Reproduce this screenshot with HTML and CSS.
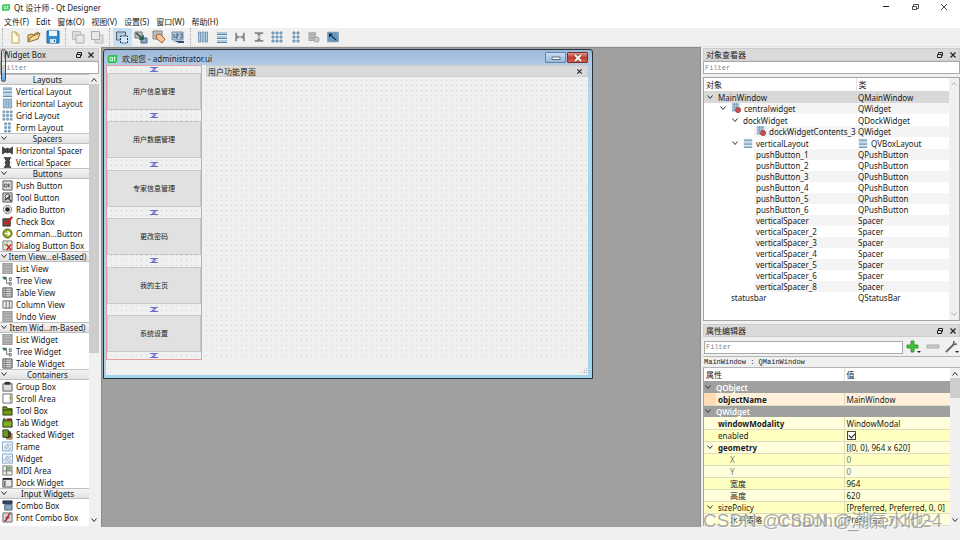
FILE: index.html
```html
<!DOCTYPE html>
<html lang="zh-CN">
<head>
<meta charset="utf-8">
<title>Qt 设计师 - Qt Designer</title>
<link rel="stylesheet" href="styles.css">
</head>
<body>
<svg class="defs" aria-hidden="true">
  <symbol id="qt" viewBox="0 0 12 10"><path d="M2 0h10v8l-2 2H0V2z" fill="#2fc552"/><path d="M3 3h3v4H3zM5 6l2 2M8.500 2v5h1.500M7.500 3.500h2.500" fill="none" stroke="#fff"/></symbol>
  <symbol id="chev" viewBox="0 0 8 8"><path d="M1.500 2.500L4 5.500l2.500-3" fill="none" stroke="currentColor" stroke-width=".9"/></symbol>
  <symbol id="float" viewBox="0 0 8 8"><path d="M2.500 3V1.500h4v3H5M1.500 3.500h4v3h-4z" fill="none" stroke="#222"/></symbol>
  <symbol id="close" viewBox="0 0 8 8"><path d="M1.500 1.500l5 5m0-5l-5 5" fill="none" stroke="#222" stroke-width="1.200"/></symbol>
  <symbol id="vlay" viewBox="0 0 12 12"><path d="M1 1h10v2.500H1zM1 5h10v2.500H1zM1 9h10v2.500H1z" fill="#a9cbe2"/><path d="M1 3.500h10M1 7.500h10M1 11.500h10" stroke="#5f84a3"/></symbol>
  <symbol id="hlay" viewBox="0 0 12 12"><path d="M1.500 1h2v10h-2zM5 1h2v10H5zM8.500 1h2v10h-2z" fill="#b4d4ea" stroke="#6288a8" stroke-width=".8"/></symbol>
  <symbol id="grid" viewBox="0 0 12 12"><path d="M1 1h2v2H1zM5 1h2v2H5zM9 1h2v2H9zM1 5h2v2H1zM5 5h2v2H5zM9 5h2v2H9zM1 9h2v2H1zM5 9h2v2H5zM9 9h2v2H9z" fill="#a9cbe2" stroke="#6288a8" stroke-width=".9"/></symbol>
  <symbol id="form" viewBox="0 0 12 12"><path d="M3 1h2v2H3zM7 1h2v2H7zM3 5h2v2H3zM7 5h2v2H7zM3 9h2v2H3zM7 9h2v2H7z" fill="#a9cbe2" stroke="#6288a8" stroke-width=".9"/></symbol>
  <symbol id="hsp" viewBox="0 0 12 12"><path d="M1 2v8M11 2v8" stroke="#222" stroke-width="1.500"/><path d="M2 3.500l2 1 2-1 2 1 2-1v5l-2-1-2 1-2-1-2 1z" fill="#666" stroke="#222"/><path d="M4 5v3M6 4v4M8 5v3" stroke="#222" stroke-width=".8"/></symbol>
  <symbol id="vsp" viewBox="0 0 12 12"><path d="M2 1h8M2 11h8" stroke="#222" stroke-width="1.500"/><path d="M3.500 2l1 2-1 2 1 2-1 2h5l-1-2 1-2-1-2 1-2z" fill="#666" stroke="#222"/><path d="M5 4h3M4 6h4M5 8h3" stroke="#222" stroke-width=".8"/></symbol>
  <symbol id="push" viewBox="0 0 12 12"><path d="M1 1h10v10H1z" fill="#ddd" stroke="#555"/><path d="M2.500 4.500h3v3h-3zM7 4v4M9.500 4L7.500 6l2 2" fill="none" stroke="#333" stroke-width=".8"/></symbol>
  <symbol id="tool" viewBox="0 0 12 12"><path d="M1 1h10v10H1z" fill="#ccc" stroke="#555"/><circle cx="6" cy="5" r="2.500" fill="#fff" stroke="#333"/><path d="M3 9l6-5M7 7l3 3" stroke="#333" stroke-width="1.300"/></symbol>
  <symbol id="radio" viewBox="0 0 12 12"><circle cx="6" cy="6" r="4.500" fill="#e8e8e8" stroke="#777"/><circle cx="6" cy="6" r="2.500" fill="#222"/></symbol>
  <symbol id="check" viewBox="0 0 12 12"><path d="M1 3h8v8H1z" fill="#555" stroke="#333"/><path d="M2 6l3 3 6-8" fill="none" stroke="#c22" stroke-width="2.500"/></symbol>
  <symbol id="cmd" viewBox="0 0 12 12"><circle cx="6" cy="6" r="5" fill="#8fa91c" stroke="#4f6410"/><path d="M3 6h5M6 3.500L8.500 6 6 8.500" fill="none" stroke="#fff" stroke-width="1.500"/></symbol>
  <symbol id="dbb" viewBox="0 0 12 12"><path d="M1 1h10v10H1z" fill="#e8e8e0" stroke="#777"/><path d="M2 4l1.500 2L6 2" fill="none" stroke="#5a5"/><path d="M5 5l5 6m0-6l-5 6" stroke="#c22" stroke-width="1.600"/></symbol>
  <symbol id="list" viewBox="0 0 12 12"><path d="M1 0h10v12H1z" fill="#b5b5b5" stroke="#858585"/><path d="M2 3h8M2 6h8M2 9h8" stroke="#999" stroke-width=".8"/></symbol>
  <symbol id="tree" viewBox="0 0 12 12"><path d="M0 2h5v3H2z" fill="#2c7a4a"/><path d="M5 4v5h3M8 3h2v3H8zM8 8h2v3H8z" fill="none" stroke="#666"/></symbol>
  <symbol id="table" viewBox="0 0 12 12"><path d="M1 1h10v10H1z" fill="#ddd" stroke="#444"/><path d="M1 3.500h10M1 6h10M1 8.500h10M4 1v10" stroke="#666" stroke-width=".8"/></symbol>
  <symbol id="col" viewBox="0 0 12 12"><path d="M1 2h10v8H1zM4.500 2v8M8 2v8" fill="#eee" stroke="#666"/></symbol>
  <symbol id="group" viewBox="0 0 12 12"><path d="M1 3h10v8H1z" fill="#ddd" stroke="#555"/><path d="M3 1h6v3H3z" fill="#333"/></symbol>
  <symbol id="scroll" viewBox="0 0 12 12"><path d="M1 1h10v10H1z" fill="#fff" stroke="#666"/><path d="M9 1v10" stroke="#888"/><path d="M8.500 4h2v3h-2z" fill="#8ab32a"/></symbol>
  <symbol id="tbox" viewBox="0 0 12 12"><path d="M1 2h4l1 2h5v7H1z" fill="#6f9b18" stroke="#2d3d0a"/><path d="M1 5.500h10" stroke="#2d3d0a"/></symbol>
  <symbol id="tab" viewBox="0 0 12 12"><path d="M1 4h10v7H1z" fill="#7fae1b" stroke="#222"/><path d="M1 1.500h3v2H1z" fill="#263"/><path d="M5 1.500h6v2H5z" fill="#922"/></symbol>
  <symbol id="stack" viewBox="0 0 12 12"><path d="M5 5h6v6H5z" fill="#e0b52a" stroke="#765"/><path d="M3 3h6v6H3z" fill="#a22" stroke="#511"/><path d="M1 1h6v8H1z" fill="#6f9b18" stroke="#243"/></symbol>
  <symbol id="frame" viewBox="0 0 12 12"><path d="M.5 1h11v10H.5z" fill="#edf4fb" stroke="#7aa5cf"/><path d="M2 8l5-5M4 9.500L10 3M7 10l3-3" stroke="#a4aeb8" stroke-width="1.200"/></symbol>
  <symbol id="mdi" viewBox="0 0 12 12"><path d="M1 1h10v10H1z" fill="#eee" stroke="#777"/><path d="M5 2h5v4H5z" fill="#7fae6b"/><path d="M1 6.500h10M5 1v10" stroke="#777"/></symbol>
  <symbol id="dock" viewBox="0 0 12 12"><path d="M1 2h10v9H1z" fill="#e6e6e6" stroke="#444"/><path d="M1 1h10v2H1z" fill="#223"/><path d="M2 4h2v6H2z" fill="#777"/></symbol>
  <symbol id="combo" viewBox="0 0 12 12"><path d="M1 1h10v3H1z" fill="#2f4762" stroke="#234"/><path d="M3 5h8v6H3z" fill="#88a6c4" stroke="#567"/></symbol>
  <symbol id="font" viewBox="0 0 12 12"><path d="M1 1h10v10H1z" fill="#d4d4d4" stroke="#666"/><path d="M9.500 1.500C6 1.500 6.500 10 2.500 10M4 6h4" fill="none" stroke="#a22" stroke-width="1.500"/></symbol>
  <symbol id="broken" viewBox="0 0 12 12"><path d="M1 0h9v2.500H1zM1 3.500h9V6H1zM1 7h5v2.500H1z" fill="#a9cbe2"/><path d="M1 2.500h9M1 6h9M1 9.500h5M4 0v9M7 0v6" stroke="#6288a8" stroke-width=".8"/><circle cx="8.500" cy="8.500" r="3" fill="#d86060" stroke="#9c2929"/><path d="M6.500 10.500l4-4" stroke="#9c2929"/></symbol>
  <symbol id="new" viewBox="0 0 14 14"><path d="M4 2h4l3 3v8H4z" fill="#fffbe2" stroke="#bba95d"/><path d="M8 2v3h3" fill="none" stroke="#bba95d"/></symbol>
  <symbol id="open" viewBox="0 0 14 14"><path d="M1 12V5l4-1 1 1 5-3v3" fill="#e7ca80" stroke="#8d6b2a"/><path d="M1 12l3-5 9-4-2 6z" fill="#f5dda0" stroke="#8d6b2a"/></symbol>
  <symbol id="save" viewBox="0 0 14 14"><path d="M1 1h12v12H1z" fill="#2f8ecb" stroke="#19679c"/><path d="M3 1h8v5H3z" fill="#e9f4fb"/><path d="M4 9h6v4H4z" fill="#d5e2ea"/><path d="M8 10h1v2H8z" fill="#19679c"/></symbol>
  <symbol id="back" viewBox="0 0 14 14"><path d="M1.500 1.500h8v8h-8z" fill="#ddd" stroke="#bbb"/><path d="M5 5h8v8H5z" fill="#e8e8e8" stroke="#aaa"/></symbol>
  <symbol id="front" viewBox="0 0 14 14"><path d="M5 5h8v8H5z" fill="#ddd" stroke="#bbb"/><path d="M1.500 1.500h8v8h-8z" fill="#e8e8e8" stroke="#aaa"/></symbol>
  <symbol id="ewid" viewBox="0 0 14 14"><path d="M1.500 2h9v8h-9z" fill="#b8cadb" stroke="#4a6278"/><path d="M5.500 6h7v7h-7z" fill="#d7e7f4" stroke="#22405e" stroke-dasharray="2 1"/></symbol>
  <symbol id="esig" viewBox="0 0 14 14"><path d="M1 2h7v6H1z" fill="#bbb" stroke="#777"/><path d="M7 8h6v5H7z" fill="#87a5c4" stroke="#4b6583"/><path d="M2 3l7 6M9 5v4H5" fill="none" stroke="#254" stroke-width="1.500"/></symbol>
  <symbol id="ebud" viewBox="0 0 14 14"><path d="M1 1h9v8H1z" fill="#bbb" stroke="#888"/><path d="M4 5l4-1 5 5-3 4-5-4z" fill="#f3c6a0" stroke="#a85c2c"/></symbol>
  <symbol id="etab" viewBox="0 0 14 14"><path d="M1 2h11v8H1z" fill="#b4c4d4" stroke="#7b8fa2"/><path d="M3 4v4M5 4h2v2H5v2h2M9 4h2v4H9" fill="none" stroke="#294f7d" stroke-width=".8"/><path d="M3 11h10v2H8z" fill="#294f7d"/></symbol>
  <symbol id="hsplit" viewBox="0 0 14 14"><path d="M2.500 2v10M11.500 2v10" stroke="#888" stroke-width="2"/><path d="M3 7h8M5 5L3.500 7 5 9M9 5l1.500 2L9 9" fill="none" stroke="#666"/></symbol>
  <symbol id="vsplit" viewBox="0 0 14 14"><path d="M2 2.500h10M2 11.500h10" stroke="#888" stroke-width="2"/><path d="M7 3v8M5 5l2-1.500L9 5M5 9l2 1.500L9 9" fill="none" stroke="#666"/></symbol>
  <symbol id="break" viewBox="0 0 14 14"><path d="M1 2h8v2H1zM1 5.500h8v2H1zM1 9h8v2H1z" fill="#ccc" stroke="#999"/><circle cx="10" cy="10" r="3" fill="#ccc" stroke="#999"/></symbol>
  <symbol id="adjust" viewBox="0 0 14 14"><path d="M1 1.500h12v11H1z" fill="#5f9bc6" stroke="#8397a8" stroke-width="1.500"/><path d="M3 4l8 7M3 7V4h3" fill="none" stroke="#123" stroke-width="1.300"/></symbol>
  <symbol id="spring" viewBox="0 0 12 6"><path d="M1 .5h10M1 5.500h10M4 1l4 1-4 2 4 1" fill="none" stroke="#3c3cc8" stroke-width=".9"/></symbol>
</svg>

<div class="app">
  <header class="titlebar">
    <svg class="logo"><use href="#qt"/></svg><h1>Qt 设计师 - Qt Designer</h1>
    <div class="winctl">
      <button aria-label="最小化"><svg viewBox="0 0 8 8"><path d="M1 3.500h6" stroke="#222"/></svg></button>
      <button aria-label="还原"><svg viewBox="0 0 8 8"><path d="M2.500 3V1.500h5v4H6M1.500 3.500h4v3h-4z" fill="none" stroke="#222" stroke-width=".8"/></svg></button>
      <button aria-label="关闭"><svg viewBox="0 0 8 8"><path d="M1 1l6 6m0-6L1 7" stroke="#222" stroke-width=".8"/></svg></button>
    </div>
  </header>
  <nav class="menubar">
    <button>文件(F)</button><button>Edit</button><button>窗体(O)</button><button>视图(V)</button><button>设置(S)</button><button>窗口(W)</button><button>帮助(H)</button>
  </nav>
  <div class="toolbar">
    <div class="tools t3"><button aria-label="新建"><svg><use href="#new"/></svg></button><button aria-label="打开"><svg><use href="#open"/></svg></button><button aria-label="保存"><svg><use href="#save"/></svg></button></div>
    <div class="tools t2"><button aria-label="置后"><svg><use href="#back"/></svg></button><button aria-label="置前"><svg><use href="#front"/></svg></button></div>
    <div class="tools t4"><button class="on" aria-label="编辑控件"><svg><use href="#ewid"/></svg></button><button aria-label="编辑信号/槽"><svg><use href="#esig"/></svg></button><button aria-label="编辑伙伴"><svg><use href="#ebud"/></svg></button><button aria-label="编辑Tab顺序"><svg><use href="#etab"/></svg></button></div>
    <div class="tools t8"><button aria-label="水平布局"><svg><use href="#hlay"/></svg></button><button aria-label="垂直布局"><svg><use href="#vlay"/></svg></button><button aria-label="水平分裂"><svg><use href="#hsplit"/></svg></button><button aria-label="垂直分裂"><svg><use href="#vsplit"/></svg></button><button aria-label="栅格布局"><svg><use href="#grid"/></svg></button><button aria-label="表单布局"><svg><use href="#form"/></svg></button><button aria-label="打破布局"><svg><use href="#break"/></svg></button><button aria-label="调整大小"><svg><use href="#adjust"/></svg></button></div>
  </div>

  <main class="work">
    <aside class="dock widgetbox">
      <div class="docktitle"><h2>Widget Box</h2><button aria-label="浮动"><svg><use href="#float"/></svg></button><button aria-label="关闭"><svg><use href="#close"/></svg></button></div>
      <input class="filter" type="text" placeholder="Filter" aria-label="Filter">
      <div class="pane">
        <div class="groups">
          <button class="group">Layouts</button>
          <ul><li><svg><use href="#vlay"/></svg>Vertical Layout</li><li><svg><use href="#hlay"/></svg>Horizontal Layout</li><li><svg><use href="#grid"/></svg>Grid Layout</li><li><svg><use href="#form"/></svg>Form Layout</li></ul>
          <button class="group"><svg><use href="#chev"/></svg>Spacers</button>
          <ul><li><svg><use href="#hsp"/></svg>Horizontal Spacer</li><li><svg><use href="#vsp"/></svg>Vertical Spacer</li></ul>
          <button class="group"><svg><use href="#chev"/></svg>Buttons</button>
          <ul><li><svg><use href="#push"/></svg>Push Button</li><li><svg><use href="#tool"/></svg>Tool Button</li><li><svg><use href="#radio"/></svg>Radio Button</li><li><svg><use href="#check"/></svg>Check Box</li><li><svg><use href="#cmd"/></svg>Comman...Button</li><li><svg><use href="#dbb"/></svg>Dialog Button Box</li></ul>
          <button class="group"><svg><use href="#chev"/></svg>Item View...el-Based)</button>
          <ul><li><svg><use href="#list"/></svg>List View</li><li><svg><use href="#tree"/></svg>Tree View</li><li><svg><use href="#table"/></svg>Table View</li><li><svg><use href="#col"/></svg>Column View</li><li><svg><use href="#list"/></svg>Undo View</li></ul>
          <button class="group"><svg><use href="#chev"/></svg>Item Wid...m-Based)</button>
          <ul><li><svg><use href="#list"/></svg>List Widget</li><li><svg><use href="#tree"/></svg>Tree Widget</li><li><svg><use href="#table"/></svg>Table Widget</li></ul>
          <button class="group"><svg><use href="#chev"/></svg>Containers</button>
          <ul><li><svg><use href="#group"/></svg>Group Box</li><li><svg><use href="#scroll"/></svg>Scroll Area</li><li><svg><use href="#tbox"/></svg>Tool Box</li><li><svg><use href="#tab"/></svg>Tab Widget</li><li><svg><use href="#stack"/></svg>Stacked Widget</li><li><svg><use href="#frame"/></svg>Frame</li><li><svg><use href="#frame"/></svg>Widget</li><li><svg><use href="#mdi"/></svg>MDI Area</li><li><svg><use href="#dock"/></svg>Dock Widget</li></ul>
          <button class="group"><svg><use href="#chev"/></svg>Input Widgets</button>
          <ul><li><svg><use href="#combo"/></svg>Combo Box</li><li><svg><use href="#font"/></svg>Font Combo Box</li></ul>
        </div>
        <div class="bar long"><svg class="up"><use href="#chev"/></svg><i></i><svg><use href="#chev"/></svg></div>
      </div>
      <div class="pill"></div>
    </aside>

    <section class="mdi">
      <div class="subwin">
        <div class="subtitle"><svg class="logo"><use href="#qt"/></svg><h2>欢迎您 - administrator.ui</h2>
          <button class="min" aria-label="最小化"><svg viewBox="0 0 12 8"><path d="M2 3h8v2.500H2z" fill="#fff" stroke="#566f8c"/></svg></button>
          <button class="cls" aria-label="关闭"><svg viewBox="0 0 12 8"><path d="M3 1l6 6m0-6L3 7" stroke="#733" stroke-width="3"/><path d="M3 1l6 6m0-6L3 7" stroke="#fff" stroke-width="1.800"/></svg></button></div>
        <div class="client">
          <div class="design">
            <div class="column">
              <div class="sp end"><svg><use href="#spring"/></svg></div><button>用户信息管理</button>
              <div class="sp"><svg><use href="#spring"/></svg></div><button>用户数据管理</button>
              <div class="sp"><svg><use href="#spring"/></svg></div><button>专家信息管理</button>
              <div class="sp"><svg><use href="#spring"/></svg></div><button>更改密码</button>
              <div class="sp"><svg><use href="#spring"/></svg></div><button>我的主页</button>
              <div class="sp"><svg><use href="#spring"/></svg></div><button>系统设置</button>
              <div class="sp end"><svg><use href="#spring"/></svg></div>
            </div>
            <div class="canvas"><div class="formtitle"><span>用户功能界面</span><svg><use href="#close"/></svg></div></div>
          </div>
          <div class="formstatus"><svg viewBox="0 0 8 8"><path d="M6 1h1v1H6zM4 3h1v1H4zM6 3h1v1H6zM2 5h1v1H2zM4 5h1v1H4zM6 5h1v1H6z" fill="#aaa"/></svg></div>
        </div>
      </div>
    </section>

    <div class="side">
      <section class="dock inspector">
        <div class="docktitle"><h2>对象查看器</h2><button aria-label="浮动"><svg><use href="#float"/></svg></button><button aria-label="关闭"><svg><use href="#close"/></svg></button></div>
        <input class="filter" type="text" placeholder="Filter" aria-label="Filter">
        <div class="pane">
          <table class="objects">
            <thead><tr><th>对象</th><th>类</th></tr></thead>
            <tbody>
              <tr class="tall sel"><td class="l0"><svg><use href="#chev"/></svg>MainWindow</td><td>QMainWindow</td></tr>
              <tr class="odd"><td class="l1"><svg><use href="#chev"/></svg><svg class="ic"><use href="#broken"/></svg>centralwidget</td><td>QWidget</td></tr>
              <tr class="tall"><td class="l2"><svg><use href="#chev"/></svg>dockWidget</td><td>QDockWidget</td></tr>
              <tr class="odd"><td class="l3"><svg class="ic"><use href="#broken"/></svg>dockWidgetContents_3</td><td>QWidget</td></tr>
              <tr class="tall"><td class="l2"><svg><use href="#chev"/></svg><svg class="ic"><use href="#vlay"/></svg>verticalLayout</td><td><svg class="ic"><use href="#vlay"/></svg>QVBoxLayout</td></tr>
              <tr class="odd"><td class="l3">pushButton_1</td><td>QPushButton</td></tr>
              <tr><td class="l3">pushButton_2</td><td>QPushButton</td></tr>
              <tr class="odd"><td class="l3">pushButton_3</td><td>QPushButton</td></tr>
              <tr><td class="l3">pushButton_4</td><td>QPushButton</td></tr>
              <tr class="odd"><td class="l3">pushButton_5</td><td>QPushButton</td></tr>
              <tr><td class="l3">pushButton_6</td><td>QPushButton</td></tr>
              <tr class="odd"><td class="l3">verticalSpacer</td><td>Spacer</td></tr>
              <tr><td class="l3">verticalSpacer_2</td><td>Spacer</td></tr>
              <tr class="odd"><td class="l3">verticalSpacer_3</td><td>Spacer</td></tr>
              <tr><td class="l3">verticalSpacer_4</td><td>Spacer</td></tr>
              <tr class="odd"><td class="l3">verticalSpacer_5</td><td>Spacer</td></tr>
              <tr><td class="l3">verticalSpacer_6</td><td>Spacer</td></tr>
              <tr class="odd"><td class="l3">verticalSpacer_8</td><td>Spacer</td></tr>
              <tr><td class="ls">statusbar</td><td>QStatusBar</td></tr>
            </tbody>
          </table>
          <div class="bar off"><svg class="up"><use href="#chev"/></svg><svg><use href="#chev"/></svg></div>
        </div>
      </section>
      <section class="dock props">
        <div class="docktitle"><h2>属性编辑器</h2><button aria-label="浮动"><svg><use href="#float"/></svg></button><button aria-label="关闭"><svg><use href="#close"/></svg></button></div>
        <div class="findrow">
          <input class="filter" type="text" placeholder="Filter" aria-label="Filter">
          <button aria-label="添加"><svg viewBox="0 0 16 14"><path d="M5 1h3v4h4v3H8v4H5V8H1V5h4z" fill="#3fc43a" stroke="#2a8d28" stroke-width=".8"/><path d="M11 11h4l-2 2z" fill="#222"/></svg></button>
          <button aria-label="删除"><svg viewBox="0 0 16 14"><path d="M2 5h12v3H2z" fill="#ccc" stroke="#aaa"/></svg></button>
          <button aria-label="配置"><svg viewBox="0 0 16 14"><path d="M2 12l8-8" stroke="#666" stroke-width="1.800"/><path d="M10 1L9.500 4.500 13 4" fill="none" stroke="#666" stroke-width="1.600"/><path d="M11 11h4l-2 2z" fill="#222"/></svg></button>
        </div>
        <p class="path">MainWindow : QMainWindow</p>
        <div class="pane">
          <table class="values">
            <thead><tr><th>属性</th><th>值</th></tr></thead>
            <tbody>
              <tr class="cat"><td colspan="2"><svg><use href="#chev"/></svg>QObject</td></tr>
              <tr class="peach"><td class="b">objectName</td><td>MainWindow</td></tr>
              <tr class="cat"><td colspan="2"><svg><use href="#chev"/></svg>QWidget</td></tr>
              <tr class="pale"><td class="b">windowModality</td><td>WindowModal</td></tr>
              <tr class="deep"><td>enabled</td><td><input type="checkbox" checked aria-label="enabled"></td></tr>
              <tr class="pale"><td class="b"><svg><use href="#chev"/></svg>geometry</td><td>[(0, 0), 964 x 620]</td></tr>
              <tr class="deep dim"><td class="in">X</td><td>0</td></tr>
              <tr class="pale dim"><td class="in">Y</td><td>0</td></tr>
              <tr class="deep"><td class="in">宽度</td><td>964</td></tr>
              <tr class="pale"><td class="in">高度</td><td>620</td></tr>
              <tr class="deep"><td><svg><use href="#chev"/></svg>sizePolicy</td><td>[Preferred, Preferred, 0, 0]</td></tr>
              <tr class="pale"><td class="in">水平策略</td><td>Preferred</td></tr>
            </tbody>
          </table>
          <div class="bar short"><svg class="up"><use href="#chev"/></svg><i></i><svg><use href="#chev"/></svg></div>
        </div>
      </section>
    </div>
  </main>
  <footer class="statusbar"></footer>
  <div class="mark">CSDN @chaohui_chen1024</div>
  <div class="mark second">CSDN @潮氣水他~</div>
</div>
</body>
</html>
```
FILE: styles.css
```css
* { box-sizing: border-box; }
body, h1, h2, p, ul { margin: 0; padding: 0; }
body {
  font: 8px/11px "Noto Sans", "Noto Sans CJK SC", sans-serif;
  color: #1a1a1a;
  background: #f0f0f0;
}
h1, h2 { font-size: 8px; font-weight: normal; }
button {
  font: inherit;
  color: inherit;
  border: 0;
  padding: 0;
  background: none;
}
svg { display: block; flex: none; }
.defs { position: absolute; width: 0; height: 0; }

.app {
  position: relative;
  height: 100vh;
  display: flex;
  flex-direction: column;
  overflow: hidden;
}

/* window chrome */
.titlebar {
  display: flex;
  align-items: center;
  height: 14px;
  padding: 0 2px;
  gap: 4px;
  background: #fff;
}
.logo { width: 8px; height: 7px; }
.winctl { margin-left: auto; display: flex; }
.winctl button { width: 29px; display: grid; place-items: center; }
.winctl svg { width: 8px; height: 8px; }
.menubar {
  display: flex;
  height: 14px;
  padding-left: 4px;
  gap: 7px;
  background: #fff;
}
.toolbar {
  display: flex;
  align-items: center;
  height: 19px;
  padding-left: 2px;
  gap: 3px;
  border-bottom: 1px solid #e2e2e2;
}
.tools {
  display: grid;
  grid-auto-flow: column;
  grid-auto-columns: 1fr;
  height: 18px;
  padding-left: 3px;
  border-left: 1px dotted #aaa;
}
.t3 { width: 60px; }
.t2 { width: 41px; }
.t4 { width: 78px; }
.t8 { width: 152px; }
.tools button { display: grid; place-items: center; }
.tools svg { width: 14px; height: 14px; }
.t8 svg { width: 12px; height: 12px; }
.tools .on { background: #c5dff5; }

/* docks */
.work { flex: 1; min-height: 0; display: flex; }
.dock { display: flex; flex-direction: column; min-height: 0; }
.docktitle {
  display: flex;
  align-items: center;
  height: 13px;
  flex: none;
  padding: 0 3px 0 2px;
  gap: 4px;
  background: #dadada;
  border: 1px solid #ccc;
}
.docktitle h2 { margin-right: auto; }
.docktitle svg { width: 8px; height: 8px; }
.filter {
  width: 100%;
  min-width: 0;
  height: 13px;
  flex: none;
  border: 1px solid #aaa;
  padding: 0 1px;
  background: #fff;
  font: 7px/11px "Liberation Mono", monospace;
}
.filter::placeholder { color: #888; }
.pane { display: flex; flex: 1; min-height: 0; overflow: hidden; background: #fff; }
.bar {
  width: 10px;
  flex: none;
  display: flex;
  flex-direction: column;
  align-items: center;
  padding: 2px 0;
  background: #f0f0f0;
}
.bar svg { width: 8px; height: 8px; }
.bar svg:last-child { margin-top: auto; }
.bar .up { transform: rotate(180deg); }
.bar i { width: 100%; background: #cdcdcd; }
.long i { height: 60%; }
.short i { height: 20px; }
.off { color: #b0b0b0; }

.widgetbox { position: relative; width: 101px; flex: none; padding: 1px 2px 1px 0; }
.groups { flex: 1; min-width: 0; }
.group {
  display: block;
  position: relative;
  width: 100%;
  height: 11px;
  padding-left: 6px;
  line-height: 9px;
  white-space: nowrap;
  background: linear-gradient(#f4f4f4, #e2e2e2);
  border: solid #c0c0c0;
  border-width: 1px 0;
}
.group svg { position: absolute; left: 0; top: 0; width: 8px; height: 8px; }
.groups ul { list-style: none; }
.groups li {
  display: flex;
  align-items: center;
  height: 12px;
  gap: 3px;
  padding-left: 2px;
  white-space: nowrap;
}
.groups li svg { width: 11px; height: 11px; }
.pill {
  position: absolute;
  left: 1px;
  top: 2px;
  width: 5px;
  height: 33px;
  border: 1px solid #3c4650;
  border-radius: 3px;
  background: linear-gradient(#dadada66 50%, #5aa0e0);
}

/* form window */
.mdi { position: relative; flex: 1; min-width: 0; background: #a0a0a0; border: solid #8c8c8c; border-width: 1px 1px 0; }
.subwin {
  position: absolute;
  left: 1px;
  top: 1px;
  width: 490px;
  height: 330px;
  display: flex;
  flex-direction: column;
  padding: 0 4px 3px 2px;
  border: 1px solid #26333d;
  border-radius: 3px 3px 0 0;
  background: linear-gradient(#9bb8d8, #b4cbe6 15px, #b9d3ec 50px, #a9d9f2 60px, #a4d5ee);
}
.subtitle { display: flex; align-items: center; height: 15px; flex: none; padding-left: 1px; }
.subtitle h2 { margin: 2px auto 0 4px; font-size: 8px; }
.subtitle .logo { width: 11px; height: 8px; margin-top: 2px; }
.subtitle button { width: 21px; height: 11px; display: grid; place-items: center; border: 1px solid #6484a8; border-radius: 1px; }
.subtitle button svg { width: 12px; height: 8px; }
.subtitle .min { background: linear-gradient(#c8dcf0, #9ab8d8); }
.subtitle .cls { margin-left: 1px; background: linear-gradient(#e09a90, #c03c2c 50%, #d0614c); border-color: #7c2a24; }
.client { flex: 1; min-height: 0; display: flex; flex-direction: column; background: #f0f0f0; }
.design {
  flex: 1;
  min-height: 0;
  display: flex;
  gap: 4px;
  background: conic-gradient(at 1px 1px, transparent 75%, #cfcfcf 0) 0 0 / 5px 5px;
}
.column { width: 96px; flex: none; display: flex; flex-direction: column; border: 1px solid #e3a0a0; }
.column button { height: 37px; flex: none; font-size: 7px; background: #e1e1e1; border: 1px solid #c8c8c8; }
.sp { flex: 1; display: grid; place-items: center; }
.sp.end { flex: none; height: 7px; }
.sp svg { width: 12px; height: 5px; }
.canvas { flex: 1; }
.formtitle {
  display: flex;
  align-items: center;
  justify-content: space-between;
  height: 12px;
  padding: 0 4px 0 1px;
  background: #dadada;
  border: 1px solid #cdcdcd;
}
.formtitle svg { width: 7px; height: 7px; }
.formstatus { height: 15px; flex: none; display: flex; align-items: flex-end; justify-content: flex-end; }
.formstatus svg { width: 8px; height: 8px; }

/* right side */
.side { width: 259px; flex: none; display: flex; flex-direction: column; padding: 1px 0 1px 2px; gap: 3px; }
.inspector { flex: 274 1 0; }
.inspector .pane { margin-top: 3px; border: 1px solid #a5a5a5; }
.props { flex: 202 1 0; }
.side .docktitle { padding-right: 2px; gap: 5px; }
table { flex: 1; align-self: flex-start; min-width: 0; border-collapse: collapse; table-layout: fixed; }
th, td { height: 11px; padding: 0 0 0 2px; line-height: 11px; text-align: left; white-space: nowrap; overflow: hidden; }
th { height: 13px; padding-left: 2px; font-weight: normal; }
td svg { display: inline-block; width: 8px; height: 8px; margin: 1px 4px 0 0; vertical-align: top; }
td svg.ic { width: 10px; height: 10px; margin: 0 3px 0 0; }
th:last-child, td:last-child { border-left: 1px solid #e2e2e2; padding-left: 2px; }
.objects th:first-child { width: 152px; }
.objects td:last-child { border-left: 0; }
.objects .tall td { height: 12px; }
.objects .odd { background: linear-gradient(90deg, transparent 50px, #f4f4f4 50px); }
.objects .sel { background: #d8d8d8; }
.objects .l1 { padding-left: 15px; }
.objects .l2 { padding-left: 27px; }
.objects .l3 { padding-left: 52px; }
.objects .ls { padding-left: 27px; }

.findrow { display: flex; align-items: center; gap: 3px; padding: 3px 0 2px 1px; }
.findrow .filter { flex: 1; }
.findrow button { width: 16px; height: 14px; }
.findrow svg { width: 16px; height: 14px; }
.path {
  height: 12px;
  padding-left: 1px;
  border: solid #b5b5b5;
  border-width: 1px 0;
  font: 7px/10px "Liberation Mono", monospace;
}
.props .pane { border-left: 1px solid #a5a5a5; }
.values th:first-child { width: 140px; }
.values td { height: 12px; padding-left: 14px; border-bottom: 1px solid #dcdcc0; }
.values td:last-child { padding-left: 2px; border-left-color: #dcdcc0; }
.values td:first-child svg { margin: 1px 4px 0 -12px; }
.values .b { font-weight: bold; }
.values .in { padding-left: 26px; }
.values .cat td { padding-left: 12px; color: #fff; font-weight: 600; background: #a0a0a0; border: 0; }
.values .cat svg { color: #222; }
.peach { background: linear-gradient(90deg, #ffdcb4 12px, #fff0dc 12px); }
.pale { background: #ffffdc; }
.deep { background: #ffffbf; }
.dim { color: #777; }
.values input {
  appearance: none;
  display: block;
  width: 9px;
  height: 9px;
  margin: 0;
  border: 1px solid #444;
  background: #fff;
}
.values input::after {
  content: "";
  display: block;
  width: 5px;
  height: 3px;
  margin: 1px;
  border: solid #222;
  border-width: 0 0 1px 1px;
  transform: rotate(-45deg);
}

.statusbar { height: 13px; flex: none; background: #f0f0f0; }
.mark {
  position: absolute;
  right: 18px;
  bottom: 8px;
  font: 19px/22px "Liberation Sans", "Noto Sans CJK SC", sans-serif;
  color: #909090c0;
  text-shadow: 1px 1px 0 #ffffffc0;
  pointer-events: none;
}
.second { right: 26px; font-size: 18px; }
```
